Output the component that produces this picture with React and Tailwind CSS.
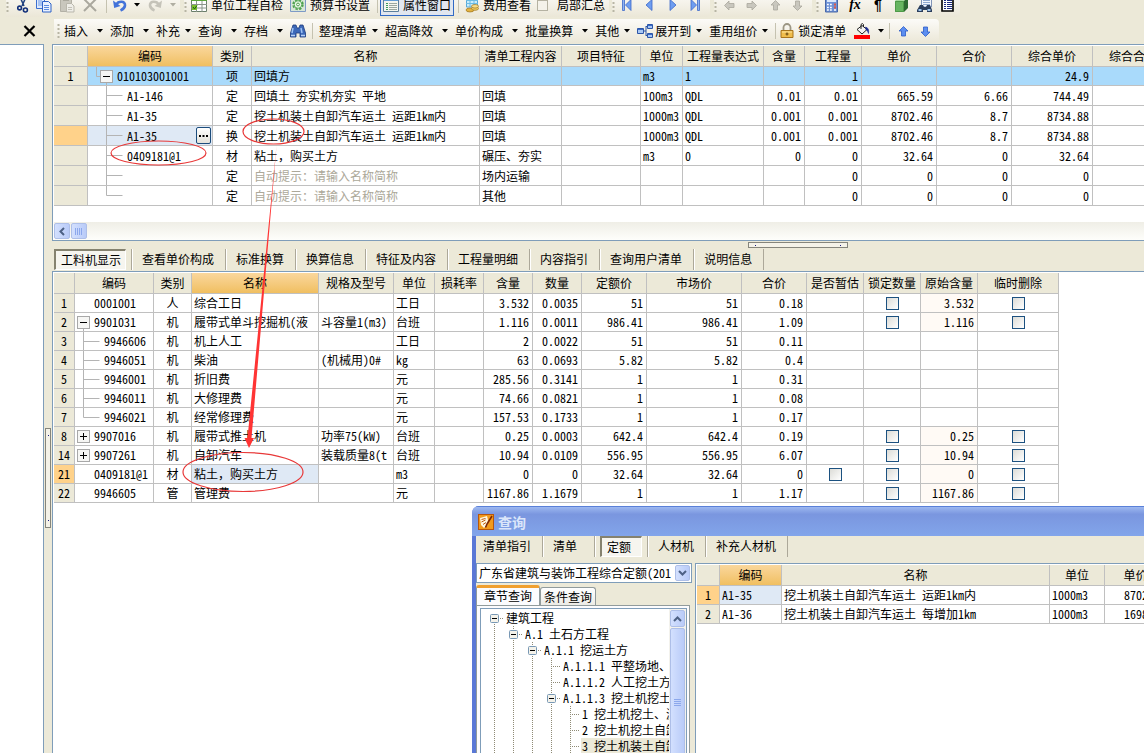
import React from "react";

/* ---------- icons ---------- */

const Svg = ({ w = 16, h = 16, children, className = "" }) => (
  <svg width={w} height={h} viewBox={`0 0 ${w} ${h}`} className={`block flex-none ${className}`} aria-hidden="true">
    {children}
  </svg>
);

const Caret = ({ color = "#000" }) => (
  <Svg w={6} h={4}>
    <path d="M0 0h6L3 3.5z" fill={color} />
  </Svg>
);

const Scissors = () => (
  <Svg w={12}>
    <path d="M3 0l4 9M9 0L5 9" stroke="#1d3f7c" strokeWidth="1.5" />
    <circle cx="2.6" cy="11" r="1.9" fill="none" stroke="#12307a" strokeWidth="1.6" />
    <circle cx="8.4" cy="13" r="2" fill="none" stroke="#12307a" strokeWidth="1.6" />
  </Svg>
);
const Copy = () => (
  <Svg>
    <path d="M.5 1.5h8v10h-8z" fill="#dfeafc" stroke="#3c6fd0" />
    <path d="M2 4h4M2 6h4M2 8h4" stroke="#6f9be8" />
    <path d="M6.500 4.500h6l2.500 2.500v8h-8.500z" fill="#e9f1ff" stroke="#2f62c6" />
    <path d="M8 8.500h5M8 10.500h5M8 12.500h5" stroke="#5b8be0" />
  </Svg>
);
const Paste = () => (
  <Svg w={15}>
    <path d="M.5 2.500h11v12h-11z" fill="#c9c7bd" stroke="#b3b1a6" />
    <path d="M3 1h6v3H3z" fill="#aaa89d" />
    <path d="M6.500 6.500h5l2.500 2.500v6H6.500z" fill="#efeee8" stroke="#b9b7ac" />
    <path d="M8 10.500h4M8 12.500h4" stroke="#c4c2b8" />
  </Svg>
);
const Cross = () => (
  <Svg w={14}>
    <path d="M1 2l12 12M13 2L1 14" stroke="#aaa89e" strokeWidth="2" />
  </Svg>
);
const Undo = ({ color = "#4373d9" }) => (
  <Svg w={14}>
    <path d="M3.500 7.500C5 4 12.500 3.500 12 8.500c-.3 3-2.500 4-4.500 5" fill="none" stroke={color} strokeWidth="2.600" />
    <path d="M0 3.500l1.200 7.500 6.300-2z" fill={color} />
  </Svg>
);
const Redo = () => (
  <Svg w={14}>
    <g transform="translate(14 0) scale(-1 1)">
      <path d="M3.500 7.500C5 4 12.500 3.500 12 8.500c-.3 3-2.500 4-4.500 5" fill="none" stroke="#c5c3b9" strokeWidth="2.600" />
      <path d="M0 3.500l1.200 7.500 6.300-2z" fill="#c5c3b9" />
    </g>
  </Svg>
);
const CheckTable = () => (
  <Svg>
    <path d="M.5.5h15v14H.5z" fill="#fff" stroke="#6b7f6b" />
    <path d="M0 0h16v4H0z" fill="#5ca43c" />
    <path d="M0 7.500h16M0 11h16M5.500 4v11M11 4v11" stroke="#8a958a" />
    <path d="M1 8h5v5H1z" fill="#79bf2c" />
    <path d="M2 10l1.500 2L6 8.500" fill="none" stroke="#1c5c10" />
  </Svg>
);
const Gear = () => (
  <Svg>
    <path d="M.5.5h15v14H.5z" fill="#d8e6d8" stroke="#7d9ac6" />
    <circle cx="8" cy="7.500" r="4.800" fill="#eaf6e6" stroke="#4fa04f" strokeWidth="1.800" strokeDasharray="2.400 1.400" />
    <circle cx="8" cy="7.500" r="3.800" fill="none" stroke="#5cab5c" />
    <circle cx="8" cy="7.500" r="1.400" fill="#fff" stroke="#4fa04f" />
  </Svg>
);
const PropWindow = () => (
  <Svg>
    <path d="M.5.5h15v14H.5z" fill="#f4f6ee" stroke="#5c7f9c" />
    <path d="M1 1h14v3H1z" fill="#5f9bd6" />
    <path d="M3 6.500h2M3 8.500h2M3 10.500h2M3 12.500h2" stroke="#3f9c5c" />
    <path d="M6 6.500h8M6 8.500h8M6 10.500h8M6 12.500h8" stroke="#9aa79f" />
  </Svg>
);
const Fee = () => (
  <Svg w={14}>
    <path d="M1.500 0h11v10h-11z" fill="#c9ecfb" stroke="#58a8d8" />
    <path d="M1 3.500h12M1 6.500h12M5 0v10M9 0v10" stroke="#6bbbe4" />
    <ellipse cx="5" cy="13" rx="4" ry="2" fill="#e3b341" stroke="#9c7420" strokeWidth=".7" />
    <ellipse cx="10" cy="11.500" rx="3.500" ry="1.800" fill="#f1cd62" stroke="#9c7420" strokeWidth=".7" />
    <ellipse cx="10" cy="9.300" rx="3.500" ry="1.800" fill="#f7dc86" stroke="#9c7420" strokeWidth=".7" />
  </Svg>
);
const NavEnd = ({ flip }) => (
  <Svg w={10}>
    <g transform={flip ? "translate(10 0) scale(-1 1)" : undefined}>
      <path d="M.5 2.500h2v11h-2z" fill="#8fb4f2" stroke="#3e68c8" strokeWidth=".8" />
      <path d="M9 2.500v11L3.500 8z" fill="#6f9ef0" stroke="#3e68c8" strokeWidth=".8" />
    </g>
  </Svg>
);
const NavStep = ({ flip }) => (
  <Svg w={8}>
    <g transform={flip ? "translate(8 0) scale(-1 1)" : undefined}>
      <path d="M7 2.500v11L1 8z" fill="#6f9ef0" stroke="#3e68c8" strokeWidth=".8" />
    </g>
  </Svg>
);
const turns = { up: 0, right: 90, down: 180, left: 270 };
const Arrow = ({ dir, fill = "#c9c7be", stroke = "#a9a79d" }) => (
  <Svg w={11} h={11}>
    <path
      d="M5.500 .5l4.500 4.500H7.500v5h-4V5H1z"
      fill={fill}
      stroke={stroke}
      strokeWidth=".8"
      transform={`rotate(${turns[dir]} 5.500 5.500)`}
    />
  </Svg>
);
const Calculator = () => (
  <Svg w={13}>
    <path d="M.5 0h12v15H.5z" fill="#6f92d6" stroke="#4868a8" />
    <path d="M2 1h9v4H2z" fill="#dbe8fb" />
    <path d="M2 7.500h6M2 10.500h6M2 13h6" stroke="#fff" strokeWidth="1.600" strokeDasharray="1.800 1.200" />
    <path d="M9 7.500h2M9 10.500h2" stroke="#e05a48" strokeWidth="1.800" />
    <path d="M9 13h2" stroke="#fff" strokeWidth="1.600" />
  </Svg>
);
const Cube = () => (
  <Svg w={15}>
    <path d="M1 4h9v11H1z" fill="#67b560" />
    <path d="M1 4l4-4h9l-4 4z" fill="#a2d89a" />
    <path d="M10 4l4-4v11l-4 4z" fill="#2c6a30" />
    <path d="M1.500 4.500h8v10h-8z" fill="none" stroke="#4e9a48" />
  </Svg>
);
const Preview = () => (
  <Svg>
    <path d="M4.500 0h10v10h-10z" fill="#f2f6fd" stroke="#8295b8" />
    <path d="M6 3.500h7M6 5.500h7M6 7.500h7" stroke="#8fa8cf" />
    <path d="M3 8h3l1 2h2l1-2h3l2 5v2h-5v-2H6v2H0v-2z" fill="#2c3e5c" />
    <path d="M1.500 13h3M10.500 13h3" stroke="#9cc4ee" strokeWidth="2" />
  </Svg>
);
const ListIcon = () => (
  <Svg w={13}>
    <path d="M1 0h11v14H1z" fill="#fff" stroke="#000" strokeWidth="1.600" />
    <path d="M3 3.500h2M3 5.500h2M3 7.500h2M3 9.500h2M3 11.500h2M6 3.500h5M6 5.500h5M6 7.500h5M6 9.500h5M6 11.500h5" stroke="#1c2c80" />
  </Svg>
);
const Binoculars = () => (
  <Svg>
    <path d="M3 2h3l1 3h2l1-3h3l2.500 8v4h-5.500v-4H6v4H.5v-4z" fill="#3c68b8" stroke="#1c3a7c" strokeWidth=".8" />
    <path d="M3 5l-1 5M11 5l1 5" stroke="#9ec2f4" strokeWidth="1.500" />
    <path d="M1 12.500h4M11 12.500h4" stroke="#b8d2f8" strokeWidth="1.500" />
  </Svg>
);
const Expand = () => (
  <Svg>
    <path d="M5 8h4M9 3v10M9 3.500h2M9 12.500h2" stroke="#2c56a8" fill="none" />
    <path d="M.5 5.500h6v5h-6z" fill="#a9c8f4" stroke="#2c56a8" />
    <path d="M10.500 1.500h5v4h-5zM10.500 10.500h5v4h-5z" fill="#a9c8f4" stroke="#2c56a8" />
    <path d="M1 6.500h5M11 2.500h4M11 11.500h4" stroke="#3c6cc8" />
  </Svg>
);
const Lock = () => (
  <Svg w={14}>
    <path d="M3.500 8V4.500a3.500 3.500 0 0 1 7 0V8" fill="none" stroke="#9c9684" strokeWidth="1.800" />
    <path d="M1 7.500h12v7H1z" fill="#f0bd4c" stroke="#a8741c" />
    <path d="M2 9h10" stroke="#fbe3a0" />
    <path d="M7 9.500v3M5.500 11h3" stroke="#6c4a10" strokeWidth="1.200" />
  </Svg>
);
const Bucket = () => (
  <Svg>
    <path d="M3 6.500l5-4 5 4-5 4.500z" fill="#f4f4f4" stroke="#222" />
    <path d="M7 6V1.500q1.500-2 2.500 0V4" fill="none" stroke="#222" />
    <path d="M11.500 4q4 1 3 6.500-.8-3-2.500-4z" fill="#1c2c90" stroke="#1c2c90" strokeWidth=".6" />
    <path d="M0 12h16v4H0z" fill="#f00" />
  </Svg>
);
const AppLogo = () => (
  <Svg>
    <path d="M0 0h16v16H0z" fill="#b8560c" />
    <path d="M1 1h14v14H1z" fill="#f29a1c" />
    <path d="M2 4l7-2 1 4-1 5-3 3-3-3z" fill="#fff6e0" />
    <path d="M3.500 5.500l4-1M3.500 8l4-2M5 10.500l3-2" stroke="#c05c10" />
    <path d="M14 2L9 10l-1.500 3.500" stroke="#7c2808" strokeWidth="1.600" fill="none" />
  </Svg>
);
const Chevron = ({ dir = "down" }) => (
  <Svg w={9} h={6}>
    <path d={dir === "down" ? "M1 1l3.500 3.500L8 1" : "M1 5l3.500-3.500L8 5"} fill="none" stroke="#4d6185" strokeWidth="2" />
  </Svg>
);

/* ---------- toolbar parts ---------- */

const Grip = () => (
  <Svg w={3} h={16}>
    <path d="M1.500 1v15" stroke="#b8b5a4" strokeWidth="2" strokeDasharray="2 2" />
  </Svg>
);
const Sep = ({ className }) => <span className={`h-4 w-px flex-none bg-[#c5c2b0] ${className}`} />;
const IconBtn = ({ label, className = "", children }) => (
  <button type="button" aria-label={label} className={`flex flex-none items-center ${className}`}>
    {children}
  </button>
);
const Drop = ({ label, tight }) => (
  <button type="button" className={`flex flex-none items-center pr-[7px] ${tight ? "gap-[5px]" : "gap-[9px]"}`}>
    {label}
    <Caret />
  </button>
);
const strip = "flex flex-none items-center rounded-r bg-gradient-to-b from-[#fcfbf8] to-[#ebe7d7]";

function TopToolbar() {
  return (
    <div className="flex h-[18px] flex-none items-end overflow-hidden pb-px pl-[6px] leading-[12px]">
      <div className={`${strip} h-6 w-[174px]`}>
        <Grip />
        <IconBtn label="剪切" className="ml-2"><Scissors /></IconBtn>
        <IconBtn label="复制" className="ml-[7px]"><Copy /></IconBtn>
        <IconBtn label="粘贴" className="ml-2"><Paste /></IconBtn>
        <IconBtn label="删除" className="ml-2"><Cross /></IconBtn>
        <Sep className="ml-[9px]" />
        <IconBtn label="撤销" className="ml-[6px] gap-[7px]"><Undo /><Caret /></IconBtn>
        <IconBtn label="恢复" className="ml-[8px] gap-[8px]"><Redo /><Caret color="#b0aea2" /></IconBtn>
      </div>
      <div className={`${strip} ml-1 h-6 w-[425px]`}>
        <Grip />
        <button type="button" className="ml-1 flex flex-none items-center gap-1"><CheckTable />单位工程自检</button>
        <button type="button" className="ml-[7px] flex flex-none items-center gap-1"><Gear />预算书设置</button>
        <Sep className="ml-[7px]" />
        <button type="button" className="ml-[2px] flex h-[22px] flex-none items-center gap-1 border border-[#316ac5] bg-[#e1e6ef] px-[2px]">
          <PropWindow />属性窗口
        </button>
        <Sep className="ml-[4px]" />
        <button type="button" className="ml-[6px] flex flex-none items-center gap-1"><Fee />费用查看</button>
        <label className="ml-[6px] flex flex-none items-center gap-[9px]">
          <input type="checkbox" className="size-[11px] appearance-none border border-[#b5b2a2] bg-[#f4f2ea]" />
          局部汇总
        </label>
      </div>
      <div className={`${strip} ml-[3px] h-6 w-[98px]`}>
        <Grip />
        <IconBtn label="首行" className="ml-[7px]"><NavEnd /></IconBtn>
        <IconBtn label="上一行" className="ml-[13px]"><NavStep /></IconBtn>
        <IconBtn label="下一行" className="ml-[16px]"><NavStep flip /></IconBtn>
        <IconBtn label="末行" className="ml-[13px]"><NavEnd flip /></IconBtn>
      </div>
      <div className={`${strip} ml-1 h-6 w-[98px]`}>
        <Grip />
        <IconBtn label="左移" className="ml-[7px]"><Arrow dir="left" /></IconBtn>
        <IconBtn label="右移" className="ml-[11px]"><Arrow dir="right" /></IconBtn>
        <IconBtn label="上移" className="ml-[13px]"><Arrow dir="up" /></IconBtn>
        <IconBtn label="下移" className="ml-[11px]"><Arrow dir="down" /></IconBtn>
      </div>
      <div className={`${strip} ml-1 h-6 w-[144px]`}>
        <Grip />
        <IconBtn label="计算器" className="ml-[6px]"><Calculator /></IconBtn>
        <button type="button" className="ml-[11px] w-[12px] flex-none font-['Liberation_Serif',serif] text-[14px] font-bold italic">fx</button>
        <button type="button" className="ml-[12px] w-[10px] flex-none font-['Liberation_Sans',sans-serif] text-[14px] font-bold">¶</button>
        <IconBtn label="模型" className="ml-[11px]"><Cube /></IconBtn>
        <IconBtn label="预览" className="ml-[8px]"><Preview /></IconBtn>
        <IconBtn label="列表" className="ml-[8px]"><ListIcon /></IconBtn>
      </div>
    </div>
  );
}

function EditToolbar() {
  return (
    <div className={`${strip} h-6 w-[885px]`}>
      <div className="flex items-center pl-[3px]">
        <Grip />
        <span className="w-1 flex-none" />
        <Drop label="插入" />
        <Drop label="添加" />
        <Drop label="补充" tight />
        <Drop label="查询" />
        <Drop label="存档" />
        <IconBtn label="查找"><Binoculars /></IconBtn>
        <Sep className="mr-[6px] ml-[6px]" />
        <Drop label="整理清单" tight />
        <Drop label="超高降效" />
        <Drop label="单价构成" />
        <Drop label="批量换算" />
        <Drop label="其他" tight />
        <span className="mr-[2px]"><Expand /></span>
        <Drop label="展开到" tight />
        <Drop label="重用组价" tight />
        <Sep className="mr-1" />
        <button type="button" className="flex flex-none items-center gap-1"><Lock />锁定清单</button>
        <IconBtn label="颜色" className="ml-2 gap-2"><Bucket /><Caret /></IconBtn>
        <Sep className="ml-[5px]" />
        <IconBtn label="上移" className="ml-[8px]"><Arrow dir="up" fill="#5c8ef0" stroke="#2c5cc8" /></IconBtn>
        <IconBtn label="下移" className="ml-[11px]"><Arrow dir="down" fill="#5c8ef0" stroke="#2c5cc8" /></IconBtn>
      </div>
    </div>
  );
}

/* ---------- grids ---------- */

const line = "border-r border-b border-[#c0c0c0]";
const cellBase = `${line} overflow-hidden p-0 whitespace-nowrap`;
const aligns = { l: "text-left pl-[2px]", c: "text-center", r: "text-right pr-[3px]" };

const Head = ({ cols }) => (
  <thead>
    <tr className="h-[21px]">
      {cols.map((c, i) => (
        <th
          key={i}
          scope="col"
          className={`${cellBase} text-center font-normal ${c[2] ? "bg-gradient-to-b from-[#fad79c] to-[#f0bf60]" : "bg-[#ece9d8]"}`}
        >
          {c[0]}
        </th>
      ))}
    </tr>
  </thead>
);
const Cols = ({ cols }) => (
  <colgroup>
    {cols.map((c, i) => (
      <col key={i} className={c[1]} />
    ))}
  </colgroup>
);
const RowHead = ({ active, children }) => (
  <th scope="row" className={`${cellBase} text-center font-normal ${active ? "bg-[#ffd28a]" : "bg-[#ece9d8]"}`}>
    {children}
  </th>
);

const ExpandBox = ({ x, y, open }) => (
  <g>
    <rect x={x + 0.5} y={y + 0.5} width="12" height="12" fill="#f6f6f4" stroke="#a8a8a8" />
    <path d={`M${x + 3} ${y + 6.5}h7`} stroke="#000" />
    {!open && <path d={`M${x + 6.5} ${y + 3}v7`} stroke="#000" />}
  </g>
);

const itemCols = [
  ["", "w-[34px]"],
  ["编码", "w-[125px]", true],
  ["类别", "w-[39px]"],
  ["名称", "w-[228px]"],
  ["清单工程内容", "w-[82px]"],
  ["项目特征", "w-[79px]"],
  ["单位", "w-[42px]"],
  ["工程量表达式", "w-[81px]"],
  ["含量", "w-[41px]"],
  ["工程量", "w-[57px]"],
  ["单价", "w-[75px]"],
  ["合价", "w-[75px]"],
  ["综合单价", "w-[81px]"],
  ["综合合价", "w-[81px]"],
];
const itemAlign = "clllllrrrrrr";
const items = [
  ["010103001001", "项", "回填方", "", "", "m3", "1", "", "1", "", "", "24.9", ""],
  ["A1-146", "定", "回填土 夯实机夯实 平地", "回填", "", "100m3", "QDL", "0.01", "0.01", "665.59", "6.66", "744.49", ""],
  ["A1-35", "定", "挖土机装土自卸汽车运土 运距1km内", "回填", "", "1000m3", "QDL", "0.001", "0.001", "8702.46", "8.7", "8734.88", ""],
  ["A1-35", "换", "挖土机装土自卸汽车运土 运距1km内", "回填", "", "1000m3", "QDL", "0.001", "0.001", "8702.46", "8.7", "8734.88", ""],
  ["0409181@1", "材", "粘土，购买土方", "碾压、夯实", "", "m3", "0", "0", "0", "32.64", "0", "32.64", ""],
  ["", "定", null, "场内运输", "", "", "", "", "0", "0", "0", "0", ""],
  ["", "定", null, "其他", "", "", "", "", "0", "0", "0", "0", ""],
];

function ItemGrid() {
  return (
    <table className="w-px table-fixed border-separate border-spacing-0">
      <Cols cols={itemCols} />
      <Head cols={itemCols} />
      <tbody>
        {items.map((r, i) => {
          const root = i === 0;
          const last = i === items.length - 1;
          const editing = i === 3;
          return (
            <tr key={i} className={root ? "h-[19px] bg-[#a9dafb]" : "h-[20px]"}>
              <RowHead active={editing}>{root ? "1" : ""}</RowHead>
              <td className={`${cellBase} ${editing ? "bg-[#dfe9f5]" : ""}`}>
                <div className={`flex items-center ${root ? "h-[18px]" : "h-[19px]"}`}>
                  {root ? (
                    <Svg w={29} h={18}>
                      <path d="M8.500 0v9.500h4" fill="none" stroke="#b4b4b4" />
                      <path d="M18.500 15v3" stroke="#b4b4b4" />
                      <ExpandBox x={12} y={3} open />
                    </Svg>
                  ) : (
                    <Svg w={39} h={19}>
                      <path d={last ? "M18.500 0v9.500h16" : "M18.500 0v19M18.500 9.500h16"} fill="none" stroke="#b4b4b4" />
                    </Svg>
                  )}
                  <span className="flex-1">{r[0]}</span>
                  {editing && (
                    <button
                      type="button"
                      className="mr-px flex h-[17px] w-[15px] items-center justify-center rounded-[2px] border border-[#1c4c7c] bg-gradient-to-b from-white to-[#e4e2da]"
                      aria-label="选择"
                    >
                      <Svg w={9} h={2}>
                        <path d="M0 1h9" stroke="#000" strokeWidth="2" strokeDasharray="2 1.500" />
                      </Svg>
                    </button>
                  )}
                </div>
              </td>
              {r.slice(1).map((v, j) => (
                <td key={j} className={`${cellBase} ${aligns[itemAlign[j]]}`}>
                  {v === null ? <span className="text-[#aca899]">自动提示：请输入名称简称</span> : v}
                </td>
              ))}
            </tr>
          );
        })}
      </tbody>
    </table>
  );
}

const resCols = [
  ["", "w-[21px]"],
  ["编码", "w-[79px]"],
  ["类别", "w-[38px]"],
  ["名称", "w-[127px]", true],
  ["规格及型号", "w-[75px]"],
  ["单位", "w-[41px]"],
  ["损耗率", "w-[49px]"],
  ["含量", "w-[49px]"],
  ["数量", "w-[49px]"],
  ["定额价", "w-[65px]"],
  ["市场价", "w-[95px]"],
  ["合价", "w-[65px]"],
  ["是否暂估", "w-[57px]"],
  ["锁定数量", "w-[57px]"],
  ["原始含量", "w-[57px]"],
  ["临时删除", "w-[81px]"],
];
const resAlign = "cllllrrrrr";
/* number, tree mark, code, then plain columns, original quantity */
const resources = [
  ["1", "", "0001001", ["人", "综合工日", "", "工日", "", "3.532", "0.0035", "51", "51", "0.18"], "3.532"],
  ["2", "open", "9901031", ["机", "履带式单斗挖掘机(液", "斗容量1(m3)", "台班", "", "1.116", "0.0011", "986.41", "986.41", "1.09"], "1.116"],
  ["3", "mid", "9946606", ["机", "机上人工", "", "工日", "", "2", "0.0022", "51", "51", "0.11"], null],
  ["4", "mid", "9946051", ["机", "柴油", "(机械用)0#", "kg", "", "63", "0.0693", "5.82", "5.82", "0.4"], null],
  ["5", "mid", "9946001", ["机", "折旧费", "", "元", "", "285.56", "0.3141", "1", "1", "0.31"], null],
  ["6", "mid", "9946011", ["机", "大修理费", "", "元", "", "74.66", "0.0821", "1", "1", "0.08"], null],
  ["7", "end", "9946021", ["机", "经常修理费", "", "元", "", "157.53", "0.1733", "1", "1", "0.17"], null],
  ["8", "closed", "9907016", ["机", "履带式推土机", "功率75(kW)", "台班", "", "0.25", "0.0003", "642.4", "642.4", "0.19"], "0.25"],
  ["14", "closed", "9907261", ["机", "自卸汽车", "装载质量8(t", "台班", "", "10.94", "0.0109", "556.95", "556.95", "6.07"], "10.94"],
  ["21", "", "0409181@1", ["材", "粘土，购买土方", "", "m3", "", "0", "0", "32.64", "32.64", "0"], "0"],
  ["22", "", "9946605", ["管", "管理费", "", "元", "", "1167.86", "1.1679", "1", "1", "1.17"], "1167.86"],
];

const Tick = ({ label }) => (
  <input
    type="checkbox"
    aria-label={label}
    className="mx-auto block size-[13px] appearance-none border border-[#1c5180] bg-gradient-to-br from-[#dcdcd7] to-white"
  />
);

function TreeMark({ kind }) {
  const child = kind === "mid" || kind === "end";
  return (
    <Svg w={child ? 29 : 19} h={18}>
      {kind === "mid" && <path d="M8.500 0v18M8.500 9.500h16" stroke="#b4b4b4" />}
      {kind === "end" && <path d="M8.500 0v9.500h16" fill="none" stroke="#b4b4b4" />}
      {kind === "open" && <path d="M8.500 15v3" stroke="#b4b4b4" />}
      {(kind === "open" || kind === "closed") && <ExpandBox x={2} y={3} open={kind === "open"} />}
    </Svg>
  );
}

function ResourceGrid() {
  return (
    <table className="w-px table-fixed border-separate border-spacing-0">
      <Cols cols={resCols} />
      <Head cols={resCols} />
      <tbody>
        {resources.map(([no, kind, code, vals, orig]) => {
          const active = no === "21";
          return (
            <tr key={no} className="h-[19px]">
              <RowHead active={active}>{no}</RowHead>
              <td className={cellBase}>
                <div className="flex h-[18px] items-center">
                  <TreeMark kind={kind} />
                  {code}
                </div>
              </td>
              {vals.map((v, j) => (
                <td key={j} className={`${cellBase} ${aligns[resAlign[j]]} ${active && j === 1 ? "bg-[#dfe9f5]" : ""}`}>
                  {v}
                </td>
              ))}
              <td className={cellBase}>{active && <Tick label="是否暂估" />}</td>
              <td className={cellBase}>{orig !== null && <Tick label="锁定数量" />}</td>
              <td className={`${cellBase} pr-[3px] text-right ${orig !== null ? "bg-[#fffaf5]" : ""}`}>{orig}</td>
              <td className={cellBase}>{orig !== null && <Tick label="临时删除" />}</td>
            </tr>
          );
        })}
      </tbody>
    </table>
  );
}

/* ---------- tab strips ---------- */

function TabStrip({ tabs, active }) {
  return (
    <div role="tablist" className="flex h-[21px]">
      {tabs.map((t, i) => (
        <div key={t} className="flex flex-none border-r border-[#aca899]">
          <div
            className={`flex border-r border-l border-[#ece9d8] pr-1 ${i === 0 ? "border-l-[#ece9d8] pl-px" : "border-l-white pl-1"}`}
          >
            <button
              type="button"
              role="tab"
              aria-selected={t === active}
              className={
                t === active
                  ? "flex min-w-[42px] items-center border-t-2 border-r border-b border-l-2 border-[#85826f] border-r-white border-b-white bg-[#f6f5ef] pr-1 pl-[5px]"
                  : "flex min-w-[41px] items-center pr-[6px] pb-px pl-[5px]"
              }
            >
              {t}
            </button>
          </div>
        </div>
      ))}
    </div>
  );
}

/* ---------- query dialog ---------- */

const tree = [
  [0, true, "建筑工程"],
  [1, true, "A.1 土石方工程"],
  [2, true, "A.1.1 挖运土方"],
  [3, false, "A.1.1.1 平整场地、"],
  [3, false, "A.1.1.2 人工挖土方"],
  [3, true, "A.1.1.3 挖土机挖土"],
  [4, false, "1 挖土机挖土、淤"],
  [4, false, "2 挖土机挖土自卸"],
  [4, false, "3 挖土机装土自卸", true],
];

function TreeRow({ level, branch, label, first, active }) {
  const x = 13 + 19 * level + 0.5;
  const w = 24 + 19 * level;
  const rails = [];
  for (let k = 0; k < level; k++) rails.push(13 + 19 * k + 0.5);
  return (
    <li className="flex h-4 items-center whitespace-nowrap">
      <Svg w={w}>
        <g stroke="#8f8b76" strokeDasharray="1 1">
          {rails.map((r) => (
            <path key={r} d={`M${r} 0v16`} />
          ))}
          <path d={`M${x} ${first ? 8 : 0}V16`} />
          <path d={`M${x - 0.5} 8.500H${w - 1}`} />
        </g>
        {branch && (
          <g>
            <rect x={x - 4} y="4.500" width="8" height="8" rx="1" fill="#f4f2ea" stroke="#7898b5" />
            <path d={`M${x - 2.5} 8.500h5`} stroke="#000" />
          </g>
        )}
      </Svg>
      <span className={active ? "flex-1 bg-[#ece9d8] pl-px" : "pl-px"}>{label}</span>
    </li>
  );
}

const quotaCols = [
  ["", "w-[23px]"],
  ["编码", "w-[62px]", true],
  ["名称", "w-[268px]"],
  ["单位", "w-[55px]"],
  ["单价", "w-[62px]"],
];
const quotas = [
  ["A1-35", "挖土机装土自卸汽车运土 运距1km内", "1000m3", "8702.46"],
  ["A1-36", "挖土机装土自卸汽车运土 每增加1km", "1000m3", "1698.36"],
];

const xpThumb = "border border-[#aebfe8] bg-gradient-to-r from-[#d3e0fe] to-[#b9cbf8] rounded-[2px]";

function QueryDialog() {
  return (
    <section
      role="dialog"
      aria-label="查询"
      className="absolute top-[506px] right-0 bottom-0 left-[472px] flex flex-col overflow-hidden rounded-tl-[7px] bg-[#5a78d6] pl-[4px]"
    >
      <div className="-ml-[4px] flex h-[30px] flex-none items-center gap-1 border-t border-[#5a80d8] bg-gradient-to-b from-[#9db8f0] via-[#7a96df] via-25% to-[#82a5ea] pl-[6px]">
        <AppLogo />
        <h2 className="text-[14px] font-bold text-[#dbe6fa]">查询</h2>
      </div>
      <div className="flex min-h-0 flex-1 flex-col bg-[#ece9d8]">
        <div className="flex-none pb-[6px]">
          <TabStrip tabs={["清单指引", "清单", "定额", "人材机", "补充人材机"]} active="定额" />
        </div>
        <div className="flex min-h-0 flex-1">
          <div className="flex w-[216px] flex-none flex-col">
            <div className="relative h-5 flex-none">
              <select
                aria-label="定额库"
                className="h-5 w-full appearance-none border border-[#7f9db9] bg-white pl-[2px] text-[12px] leading-[16px]"
              >
                <option>广东省建筑与装饰工程综合定额(201</option>
              </select>
              <span className={`pointer-events-none absolute top-[2px] right-[2px] flex h-4 w-[15px] items-center justify-center ${xpThumb}`}>
                <Chevron />
              </span>
            </div>
            <div role="tablist" className="mt-[2px] flex h-[20px] flex-none items-end">
              <button type="button" role="tab" aria-selected="true" className="-mb-px h-[21px] rounded-t-[3px] border border-t-[3px] border-[#919b9c] border-t-[#f0a030] border-b-[#fcfcfe] bg-[#fcfcfe] px-[7px] pb-px">
                章节查询
              </button>
              <button type="button" role="tab" aria-selected="false" className="h-[18px] rounded-t-[3px] border border-b-0 border-[#919b9c] bg-gradient-to-b from-white to-[#ecebe6] px-[3px]">
                条件查询
              </button>
            </div>
            <div className="mr-[2px] flex min-h-0 flex-1 border border-b-0 border-[#919b9c] bg-[#fcfcfe] px-[2px] pt-[2px]">
              <div className="ml-px flex min-h-0 min-w-0 flex-1 border border-b-0 border-[#7f9db9] bg-white">
                <ul className="min-w-0 flex-1 overflow-hidden pt-px">
                  {tree.map(([level, branch, label, active], i) => (
                    <TreeRow key={label} level={level} branch={branch} label={label} active={active} first={i === 0} />
                  ))}
                </ul>
                <div className="flex w-[17px] flex-none flex-col gap-px bg-[#f3f2ec] px-px pt-px">
                  <button type="button" aria-label="向上" className={`flex h-[17px] flex-none items-center justify-center ${xpThumb}`}>
                    <Chevron dir="up" />
                  </button>
                  <span className={`flex h-[150px] flex-none items-center justify-center ${xpThumb}`}>
                    <Svg w={7} h={8}>
                      <path d="M0 .5h7M0 2.500h7M0 4.500h7M0 6.500h7" stroke="#8ca8ec" />
                    </Svg>
                  </span>
                </div>
              </div>
            </div>
          </div>
          <div className="ml-[3px] min-w-0 flex-1 overflow-hidden border-t border-l border-[#7f9db9] bg-white pt-px pl-px">
            <table className="w-px table-fixed border-separate border-spacing-0">
              <Cols cols={quotaCols} />
              <Head cols={quotaCols} />
              <tbody>
                {quotas.map((q, i) => (
                  <tr key={q[0]} className="h-[19px]">
                    <RowHead active={i === 0}>{i + 1}</RowHead>
                    <td className={`${cellBase} pl-[2px] ${i === 0 ? "bg-[#dfe9f5]" : ""}`}>{q[0]}</td>
                    <td className={`${cellBase} pl-[2px]`}>{q[1]}</td>
                    <td className={`${cellBase} pl-[2px]`}>{q[2]}</td>
                    <td className={`${cellBase} text-right`}>{q[3]}</td>
                  </tr>
                ))}
              </tbody>
            </table>
          </div>
        </div>
      </div>
    </section>
  );
}

/* ---------- red pen marks over the grids ---------- */

const Marks = () => (
  <svg className="pointer-events-none absolute top-0 left-0" width="330" height="500" viewBox="0 0 330 500" aria-hidden="true">
    <g fill="none" stroke="#e83838" strokeWidth="1.200">
      <ellipse cx="158.500" cy="153" rx="47.500" ry="12" />
      <ellipse cx="273.500" cy="131.500" rx="30.500" ry="12.500" />
      <ellipse cx="243" cy="472" rx="60" ry="19.500" />
    </g>
    <path d="M276.600 145L251.500 438H254L249 448 244.500 438H247.500z" fill="#ff3434" />
  </svg>
);

export default function App() {
  return (
    <div
      lang="zh-CN"
      className="relative flex h-screen flex-col overflow-hidden bg-[#ece9d8] text-[12px] leading-[16px] text-black [font-family:'Noto_Sans_Mono_CJK_SC','Noto_Sans_CJK_SC',sans-serif]"
    >
      <TopToolbar />
      <div className="flex min-h-0 flex-1">
        <aside className="flex w-[44px] flex-none flex-col">
          <div className="flex h-[26px] flex-none items-center justify-end pr-[8px]">
            <button type="button" aria-label="关闭">
              <Svg w={13} h={12}>
                <path d="M1.500 1l10 10M11.500 1l-10 10" stroke="#000" strokeWidth="2.200" />
              </Svg>
            </button>
          </div>
          <div className="flex-1 border-t border-r border-[#7f9db9] bg-white" />
        </aside>
        <div className="flex w-2 flex-none flex-col pt-[410px] pl-px">
          <div className="flex h-[100px] w-[6px] flex-col items-center justify-between border border-[#85857c] bg-[#f4f2e8] py-[6px]">
            <span className="size-px bg-[#1c1c80]" />
            <span className="size-px bg-[#1c1c80]" />
          </div>
        </div>
        <main className="flex min-w-0 flex-1 flex-col">
          <div className="flex flex-none py-px pl-[2px]">
            <EditToolbar />
          </div>
          <div className="flex-none overflow-hidden border-t border-b border-l border-[#7f9db9] bg-white pt-px pl-px">
            <ItemGrid />
            <div className="mt-4 flex h-[18px] items-center gap-px bg-gradient-to-b from-[#efeee6] to-[#fefefb]">
              <button type="button" aria-label="向左" className={`flex h-4 w-4 items-center justify-center ${xpThumb}`}>
                <Svg w={6} h={9}>
                  <path d="M5 1L1.500 4.500 5 8" fill="none" stroke="#4d6185" strokeWidth="2" />
                </Svg>
              </button>
              <span className={`flex h-4 w-4 items-center justify-center ${xpThumb}`}>
                <Svg w={8} h={7}>
                  <path d="M.5 0v7M2.500 0v7M4.500 0v7M6.500 0v7" stroke="#8ca8ec" />
                </Svg>
              </span>
            </div>
          </div>
          <div className="relative flex-none pt-2 pb-px">
            <TabStrip
              tabs={["工料机显示", "查看单价构成", "标准换算", "换算信息", "特征及内容", "工程量明细", "内容指引", "查询用户清单", "说明信息"]}
              active="工料机显示"
            />
            <div className="absolute top-px left-[696px] flex h-[6px] w-[100px] items-center justify-between border border-[#85857c] bg-[#f4f2e8] px-[6px]">
              <span className="size-px bg-[#1c1c80]" />
              <span className="size-px bg-[#1c1c80]" />
            </div>
          </div>
          <div className="min-h-0 flex-1 overflow-hidden border-t border-l border-[#7f9db9] bg-white pt-px pl-px">
            <ResourceGrid />
          </div>
        </main>
      </div>
      <Marks />
      <QueryDialog />
    </div>
  );
}
